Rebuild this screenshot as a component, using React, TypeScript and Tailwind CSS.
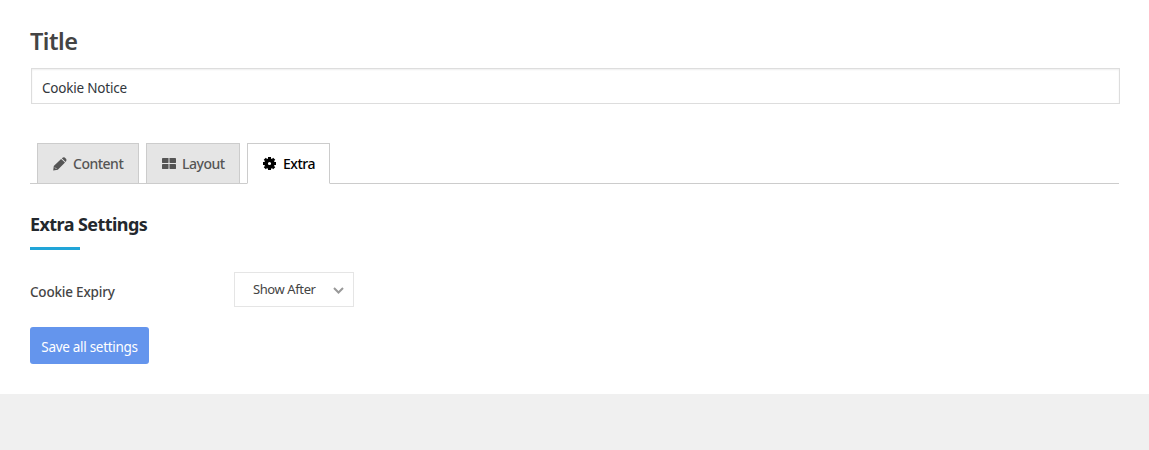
import type { ReactNode } from "react";
import clsx from "clsx";

function PencilIcon() {
  return (
    <svg width="14" height="14" viewBox="0 0 14 14" fill="currentColor">
      <path d="M.2 13.5.8 9 8.1 1.9 12 5.6 4.8 12.8ZM8.8 1.3 10 .5Q11 0 11.7.6L13.2 2.1Q13.8 3 13.2 3.9L12.6 5Z" />
      <path d="m2 10.5 1.5 1.5" stroke="#e5e5e5" strokeWidth=".8" />
    </svg>
  );
}

function GridIcon() {
  return (
    <svg width="14" height="11" viewBox="0 0 14 11" fill="currentColor">
      <rect width="6.5" height="5" rx=".4" />
      <rect x="7.5" width="6.5" height="5" rx=".4" />
      <rect y="6" width="6.5" height="5" rx=".4" />
      <rect x="7.5" y="6" width="6.5" height="5" rx=".4" />
    </svg>
  );
}

function GearIcon() {
  return (
    <svg width="13" height="13" viewBox="0 0 13 13" fill="none" stroke="currentColor">
      <circle cx="6.5" cy="6.5" r="3.4" strokeWidth="3.6" />
      <path
        strokeWidth="3"
        d="M6.5 0V2M6.5 11V13M0 6.5H2M11 6.5H13M1.8 1.8 3.2 3.2M9.8 9.8 11.2 11.2M1.8 11.2 3.2 9.8M9.8 3.2 11.2 1.8"
      />
    </svg>
  );
}

interface TabProps {
  icon: ReactNode;
  label: string;
  className: string;
  active?: boolean;
}

function Tab({ icon, label, className, active }: TabProps) {
  return (
    <button
      type="button"
      role="tab"
      aria-selected={!!active}
      className={clsx(
        "-mb-px flex h-[41px] items-center border border-[#ccc] pl-[15px] text-sm font-medium tracking-[-0.5px] whitespace-nowrap",
        active ? "border-b-white bg-white text-black" : "bg-[#e5e5e5] text-[#555]",
        className,
      )}
    >
      {icon}
      <span>{label}</span>
    </button>
  );
}

export default function App() {
  return (
    <div className="h-[450px] bg-[#f0f0f0] font-['Noto_Sans',sans-serif] text-[#444]">
      <main className="h-[394px] bg-white px-[30px] pt-[25px]">
        <h2 className="h-[43px] text-[23.5px] leading-8 font-semibold tracking-[-0.5px]">Title</h2>
        <input
          type="text"
          aria-label="Title"
          defaultValue="Cookie Notice"
          className="ml-px block h-9 w-[1089px] border border-[#ddd] px-2.5 pt-[3px] text-[13.5px] tracking-[-0.2px] text-[#32373c] shadow-[inset_0_1px_2px_rgba(0,0,0,0.07)] outline-none"
        />

        <div role="tablist" className="mt-[39px] flex h-[41px] gap-[7px] border-b border-[#ccc] pl-[7px]">
          <Tab icon={<PencilIcon />} label="Content" className="w-[102px] gap-1.5" />
          <Tab icon={<GridIcon />} label="Layout" className="w-[94px] gap-1.5" />
          <Tab icon={<GearIcon />} label="Extra" className="w-[83px] gap-[7px]" active />
        </div>

        <h3 className="mt-[27px] h-9 text-lg leading-[26px] font-bold tracking-[-0.57px] text-[#23282d]">
          Extra Settings
        </h3>
        <div className="h-[3px] w-[50px] bg-[#21a5d8]" />

        <div className="mt-[22px] flex h-[35px]">
          <label className="w-[204px] pt-[10px] text-[13.5px] leading-5 font-medium tracking-[-0.2px]">
            Cookie Expiry
          </label>
          <button
            type="button"
            className="flex h-[35px] w-[120px] items-center justify-between border border-[#e5e5e5] pr-[9px] pl-[18px] text-[13px] tracking-[-0.4px] text-[#444]"
          >
            Show After
            <svg width="11" height="7" viewBox="0 0 11 7" fill="none" stroke="#999" strokeWidth="2" className="mt-0.5">
              <path d="m1 1 4.5 4.5L10 1" />
            </svg>
          </button>
        </div>

        <button
          type="button"
          className="mt-5 h-[37px] w-[119px] rounded-[3px] bg-[#6495ed] pt-[3px] text-[13.5px] tracking-[-0.3px] whitespace-nowrap text-white"
        >
          Save all settings
        </button>
      </main>
    </div>
  );
}
